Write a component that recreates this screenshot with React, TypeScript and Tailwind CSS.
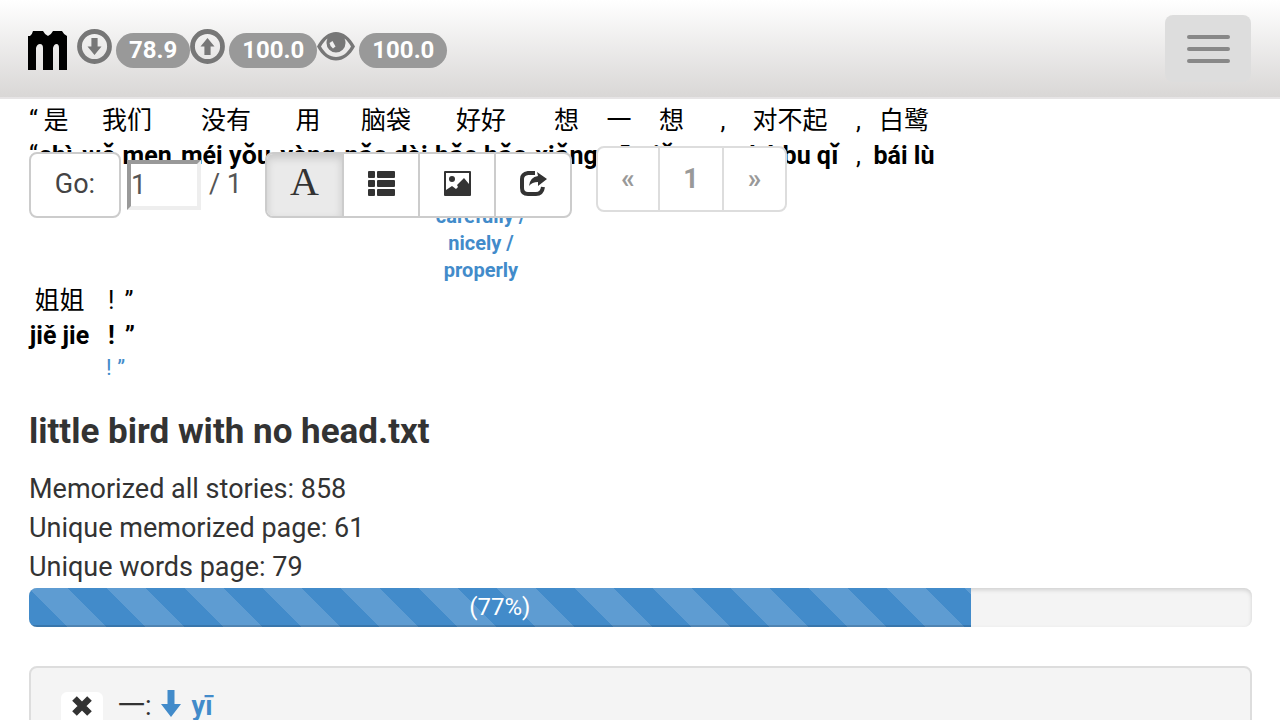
import type { ReactNode } from "react";

type Word = { hanzi: string; pinyin: ReactNode; width: string; meanings?: string[] };

const firstLine: Word[] = [
  { hanzi: "是", pinyin: "shì", width: "w-[34px]" },
  { hanzi: "我们", pinyin: "wǒ men", width: "w-[90px]" },
  { hanzi: "没有", pinyin: "méi yǒu", width: "w-[90px]" },
  { hanzi: "用", pinyin: "yòng", width: "w-[56px]" },
  { hanzi: "脑袋", pinyin: "nǎo dài", width: "w-[82px]" },
  { hanzi: "好好", pinyin: "hǎo hǎo", width: "w-[90px]", meanings: ["carefully /", "nicely /", "properly"] },
  { hanzi: "想", pinyin: "xiǎng", width: "w-[63px]" },
  { hanzi: "一", pinyin: "yī", width: "w-[24px]" },
  { hanzi: "想", pinyin: "xiǎng", width: "w-[63px]" },
];

function Column({ word }: { word: Word }) {
  return (
    <div className={`flex flex-col items-center whitespace-nowrap ${word.width}`}>
      <span className="text-[25px] leading-[38px]">{word.hanzi}</span>
      <span className="text-[25px] font-bold leading-[31px]">{word.pinyin}</span>
      {word.meanings && (
        <div className="flex flex-col items-center pt-[32px] text-[20px] font-bold leading-[27px] text-[#428bca]">
          {word.meanings.map((m) => (
            <span key={m}>{m}</span>
          ))}
        </div>
      )}
    </div>
  );
}

function CircleArrow({ up = false }: { up?: boolean }) {
  return (
    <svg viewBox="0 0 35 35" className="h-[35px] w-[35px] shrink-0" aria-hidden="true">
      <circle cx="17.5" cy="17.5" r="15" fill="none" stroke="#777" strokeWidth="4.8" />
      <path
        d="M14.4 9h6.2v8.500H24.500L17.500 26 10.500 17.500h3.900z"
        fill="#777"
        transform={up ? "rotate(180 17.5 17.5)" : undefined}
      />
    </svg>
  );
}

function Badge({ children }: { children: ReactNode }) {
  return (
    <span className="mt-[4px] flex h-[35px] items-center rounded-full bg-[#999] px-[13px] text-[24px] font-bold text-white">
      {children}
    </span>
  );
}

export default function App() {
  return (
    <div className="relative h-screen overflow-hidden bg-white font-[Roboto,'Noto_Sans_CJK_SC',sans-serif] text-[27px] leading-[39px] text-[#333]">
      <header className="flex h-[99px] items-start justify-between border-b-2 border-[#e6e4e5] bg-linear-to-b from-white to-[#d9d7d6] pl-[28px] pr-[29px]">
        <div className="flex items-start pt-[29px]">
          <a href="#home" aria-label="Home" className="mr-[10px] mt-[2px]">
            <svg viewBox="0 0 39 39" className="h-[39px] w-[39px]" aria-hidden="true">
              <path
                d="M0 39V5H2Q4 4 5 0H15Q17 4 20 5 23 4 25 0H34Q36 4 39 5V39H31V17Q31 13 28.500 13T25 17V39H15V17Q15 13 12 13T8 17V39Z"
                fill="#000"
              />
            </svg>
          </a>
          <div className="flex gap-[4px]">
            <CircleArrow />
            <Badge>78.9</Badge>
          </div>
          <div className="flex gap-[4px]">
            <CircleArrow up />
            <Badge>100.0</Badge>
          </div>
          <div className="flex gap-[4px]">
            <svg viewBox="0 0 38 35" className="h-[35px] w-[38px]" aria-hidden="true">
              <path
                fillRule="evenodd"
                d="M0 17.500C5 8 12 3 19 3S33 8 38 17.500C33 27 26 31.500 19 31.500S5 27 0 17.500ZM4 17.500C8 24.500 13 28 19 28S30 24.500 34 17.500C32 14 30 11.500 27.500 9.500Q28.500 11.500 28.500 14A9.500 9.500 0 0 1 9.500 14Q9.500 11.500 10.500 9.500C8 11.500 6 14 4 17.500Z"
                fill="#777"
              />
              <path d="M12.500 14 15.500 12 18.500 17.500 16 19.500Q13 17.500 12.500 14Z" fill="#eee" />
            </svg>
            <Badge>100.0</Badge>
          </div>
        </div>
        <button type="button" aria-label="Toggle navigation" className="mt-[15px] flex h-[67px] w-[86px] flex-col items-center justify-center gap-[8px] rounded-[8px] bg-[#ddd]">
          <span className="h-[4px] w-[43px] rounded-full bg-[#888]" />
          <span className="h-[4px] w-[43px] rounded-full bg-[#888]" />
          <span className="h-[4px] w-[43px] rounded-full bg-[#888]" />
        </button>
      </header>

      <main className="pl-[29px] pr-[28px]">
        <section className="pt-[3px] text-black">
          <div className="flex h-[180px] items-start gap-[9px]">
            <div className="flex">
              <div className="flex w-[10px] flex-col text-[25px]">
                <span className="leading-[38px]">“</span>
                <span className="leading-[31px]">“</span>
              </div>
              <Column word={firstLine[0]} />
            </div>
            {firstLine.slice(1).map((w, i) => (
              <Column key={i} word={w} />
            ))}
            <Column word={{ hanzi: ",", pinyin: ",", width: "w-[22px]" }} />
            <Column word={{ hanzi: "对不起", pinyin: "duì bu qǐ", width: "w-[94px]" }} />
            <div className="flex w-[18px] flex-col items-end pr-[3px] text-[25px]">
              <span className="leading-[38px]">,</span>
              <span className="leading-[31px]">,</span>
            </div>
            <Column word={{ hanzi: "白鹭", pinyin: "bái lù", width: "w-[62px]" }} />
          </div>
          <div className="flex items-start gap-[16px]">
            <Column word={{ hanzi: "姐姐", pinyin: "jiě jie", width: "w-[61px]" }} />
            <div className="flex flex-col text-[25px]">
              <span className="flex gap-[10px] pl-[2px] leading-[38px]"><span>!</span><span>”</span></span>
              <span className="flex gap-[10px] pl-[2px] font-bold leading-[31px]"><span>!</span><span>”</span></span>
              <span className="text-[22px] leading-[34px] text-[#428bca]">! ”</span>
            </div>
          </div>
        </section>

        <h1 className="mt-[26px] text-[35px] font-bold leading-[42px]">little bird with no head.txt</h1>
        <div className="mt-[17px]">
          <p>Memorized all stories: 858</p>
          <p>Unique memorized page: 61</p>
          <p>Unique words page: 79</p>
        </div>

        <div role="progressbar" aria-label="Memorized words" aria-valuenow={77} aria-valuemin={0} aria-valuemax={100} className="mt-[1px] h-[39px] overflow-hidden rounded-[8px] bg-[#f4f4f4] shadow-[inset_0_2px_4px_rgba(0,0,0,0.15)]">
          <div className="h-full w-[77%] bg-[#428bca] bg-[linear-gradient(45deg,rgba(255,255,255,.15)_25%,transparent_25%,transparent_50%,rgba(255,255,255,.15)_50%,rgba(255,255,255,.15)_75%,transparent_75%)] bg-[length:78px_78px] text-center text-[24px] leading-[38px] text-white shadow-[inset_0_-2px_0_rgba(0,0,0,0.15)]">
            (77%)
          </div>
        </div>

        <section className="mt-[39px] rounded-[8px] border-2 border-[#ddd] bg-[#f4f4f4] px-[30px] py-[16px]">
          <div className="flex items-center">
            <button type="button" aria-label="Remove word" className="mt-[8px] flex h-[36px] w-[42px] items-center justify-center rounded-[6px] bg-white pb-[8px]">
              <svg viewBox="0 0 20 20" className="h-[20px] w-[20px]" aria-hidden="true">
                <path d="M2.500 2.500 17.500 17.500M17.500 2.500 2.500 17.500" stroke="#333" strokeWidth="6.500" />
              </svg>
            </button>
            <span className="ml-[15px]">一:</span>
            <svg viewBox="0 0 20 27" className="mb-[6px] ml-[9px] h-[27px] w-[20px]" aria-hidden="true">
              <path d="M6.500 0h7v14H20L10 27 0 14h6.500Z" fill="#428bca" />
            </svg>
            <span className="ml-[11px] font-bold text-[#428bca]">yī</span>
          </div>
        </section>
      </main>

      <div className="absolute left-[29px] top-[146px] flex items-start">
        <form className="flex items-start pt-[6px]" onSubmit={(e) => e.preventDefault()}>
          <button type="submit" className="h-[66px] w-[92px] rounded-[8px] border-2 border-[#ccc] bg-white pb-[2px] text-[#444]">Go:</button>
          <input type="text" aria-label="Page" defaultValue="1" className="ml-[6px] mt-[8px] h-[50px] w-[74px] border-4 border-b-[#eee] border-l-[#999] border-r-[#eee] border-t-[#999] bg-white text-[#555] outline-none" />
          <span className="ml-[8px] mt-[13px] w-[56px] text-[#555]">/ 1</span>
        </form>
        <div className="mt-[6px] flex h-[66px] divide-x-2 divide-[#ccc] overflow-hidden rounded-[8px] border-2 border-[#ccc] bg-white">
          <button type="button" aria-label="Text" className="w-[77px] bg-[#eaeaea] pb-[8px] font-['Liberation_Serif',serif] text-[40px] shadow-[inset_0_4px_8px_rgba(0,0,0,0.15)]">A</button>
          <button type="button" aria-label="List" className="flex w-[76px] items-center justify-center pb-[4px]">
            <svg viewBox="0 0 27 25" className="h-[25px] w-[27px]" fill="#333" aria-hidden="true">
              <rect width="7" height="7" rx="1" /><rect x="9" width="18" height="7" rx="1" />
              <rect y="9" width="7" height="7" rx="1" /><rect x="9" y="9" width="18" height="7" rx="1" />
              <rect y="18" width="7" height="7" rx="1" /><rect x="9" y="18" width="18" height="7" rx="1" />
            </svg>
          </button>
          <button type="button" aria-label="Picture" className="flex w-[76px] items-center justify-center pb-[4px]">
            <svg viewBox="0 0 27 25" className="h-[25px] w-[27px]" aria-hidden="true">
              <path d="M1 1H26V24H1Z" fill="none" stroke="#333" strokeWidth="2" strokeLinejoin="round" />
              <circle cx="8" cy="8" r="3" fill="#333" />
              <path d="M2 19 8 15 12 18 14 16 13 14 20 7 25 13V24H2Z" fill="#333" />
            </svg>
          </button>
          <button type="button" aria-label="Share" className="flex w-[74px] items-center justify-center pb-[4px]">
            <svg viewBox="0 0 27 25" className="h-[25px] w-[27px]" aria-hidden="true">
              <path d="M15 2H8Q2 3 2 8V17Q2 23 8 23H16Q22 23 23 16" fill="none" stroke="#333" strokeWidth="4" />
              <path d="M17 1 27 8 18 15V11Q12 11 9 15 10 6 18 5Z" fill="#333" />
            </svg>
          </button>
        </div>
        <nav aria-label="Pages" className="ml-[24px] flex h-[66px] divide-x-2 divide-[#ddd] overflow-hidden rounded-[8px] border-2 border-[#ddd] bg-white font-bold text-[#999]">
          <button type="button" aria-label="Previous" className="w-[62px]">«</button>
          <button type="button" className="w-[64px]">1</button>
          <button type="button" aria-label="Next" className="w-[61px]">»</button>
        </nav>
      </div>
    </div>
  );
}
